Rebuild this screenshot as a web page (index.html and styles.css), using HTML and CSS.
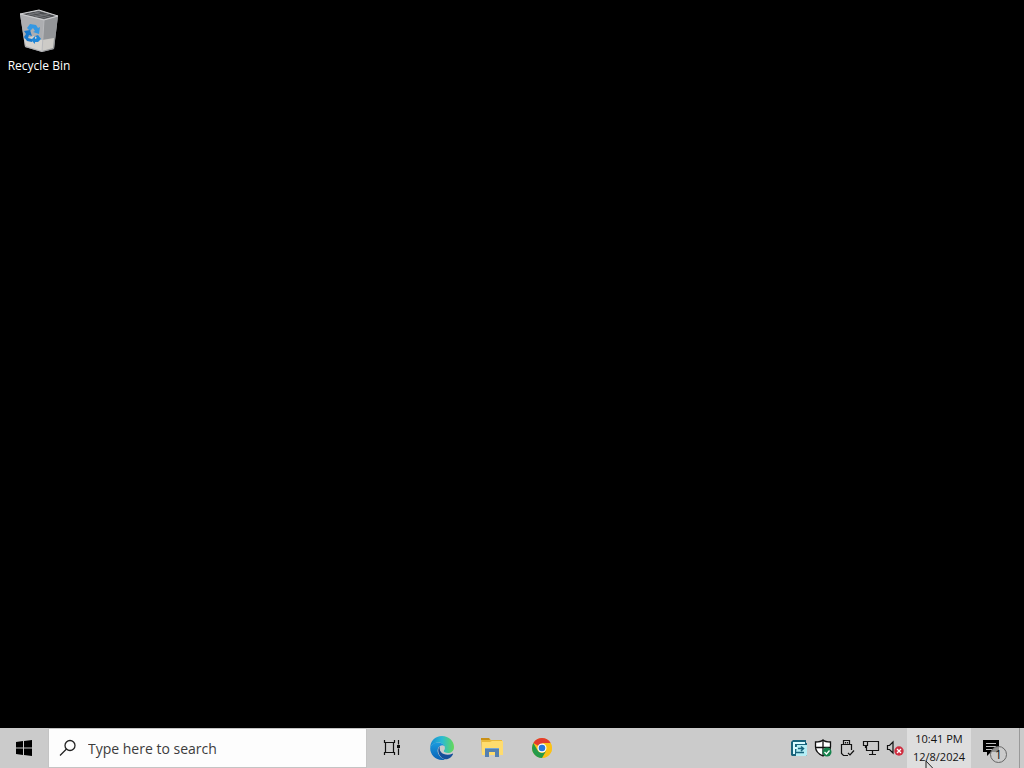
FILE: index.html
```html
<!DOCTYPE html>
<html lang="en">
<head>
  <meta charset="UTF-8">
  <meta name="viewport" content="width=device-width, initial-scale=1.0">
  <title>Desktop</title>
  <link rel="stylesheet" href="styles.css">
</head>
<body>

<main class="desktop">
  <button type="button" class="shortcut">
    <svg width="48" height="48" viewBox="0 0 48 48" aria-hidden="true">
      <path d="M5 6 24 2 43 8 39 41 27 44 10 39z" fill="#a4a5a8"/>
      <path d="M5 6 29 12 27 44 10 39z" fill="#adaeb1"/>
      <path d="M29 12 43 8 39 41 27 44z" fill="#939598"/>
      <path d="M9 31 19 28 27 32 39 30 38 40 27 43 11 38z" fill="#e5e2dc" opacity=".7"/>
      <path d="M7 6 24 3 41 8 29 11z" fill="#4b4d50"/>
      <path d="M14 6 31 10M20 5 35 9M12 7 25 4M20 9 34 6" stroke="#74767a" fill="none"/>
      <path d="M5 6 24 2 43 8 29 12z" fill="none" stroke="#cfd0d2"/>
      <path d="M29 12 27 44" stroke="#b9babd"/>
      <path d="M12 20 15 16 21 17 23 20 25 19 24 26 18 24 20 23 18 20 15 23z" fill="#3498e3"/>
      <path d="M9 23 15 22 17 28 14 27 13 30 17 31 17 34 12 33 9 29 11 26z" fill="#1778cc"/>
      <path d="M23 27 26 31 23 34 20 34 20 36 16 32 20 28 20 31 22 30 20 28z" fill="#1e86d8"/>
    </svg>
    <span>Recycle Bin</span>
  </button>
</main>

<footer class="taskbar">
  <button type="button" class="task" aria-label="Start">
    <svg width="16" height="16" viewBox="0 0 16 16">
      <path d="M0 2 7 1V7.500H0zM8 1 16 0V7.500H8zM0 8.500H7V15L0 14zM8 8.500H16V16L8 15z" fill="#000"/>
    </svg>
  </button>

  <label class="search">
    <svg width="18" height="18" viewBox="0 0 18 18" aria-hidden="true">
      <circle cx="11" cy="6.500" r="5" fill="none" stroke="#222" stroke-width="1.300"/>
      <path d="M7.500 10 1 16.500" stroke="#222" stroke-width="1.300"/>
    </svg>
    <input type="text" placeholder="Type here to search" aria-label="Search">
  </label>

  <nav class="apps">
    <button type="button" class="task" aria-label="Task View">
      <svg width="18" height="18" viewBox="0 0 18 18" fill="none" stroke="#111">
        <path d="M1.500 1V3.500H11.500V1M1.500 16V13.500H11.500V16M2.500 3.500V13.500M10.500 3.500V13.500" stroke-width="1.200"/>
        <path d="M15.500 1V5.500M15.500 9.500V16" stroke-width="1.200"/>
        <path d="M14 6H17V9H14z" fill="#111" stroke="none"/>
      </svg>
    </button>
    <button type="button" class="task" aria-label="Microsoft Edge">
      <svg width="24" height="24" viewBox="0 0 24 24">
        <defs>
          <linearGradient id="edge-top" x1="0" x2="1" y1=".4" y2=".4">
            <stop offset="0" stop-color="#168bd2"/>
            <stop offset=".5" stop-color="#2abbd2"/>
            <stop offset="1" stop-color="#66d957"/>
          </linearGradient>
          <linearGradient id="edge-low" x1="0" x2="0" y1="0" y2="1">
            <stop offset="0" stop-color="#1b9bdf"/>
            <stop offset="1" stop-color="#0961b5"/>
          </linearGradient>
        </defs>
        <path d="M.300 12C0 5 5 0 12 0s12 5 12 11c0 4-3 6-6 6-2.500 0-4.500-.800-4.500-1.900 0-.700 1.200-1.100 1.200-3.100C14.700 9 12 6.500 8.500 6.500 4 6.500 1 9 .300 12z" fill="url(#edge-top)"/>
        <path d="M.200 12C1 8.500 4.500 6.500 8 6.500c3 0 5.500 1.500 6.300 3.500-1-.900-3-1-4.300 0C7 12 7 16 9 19c1.500 2.500 4 4 6 4.500-1 .400-2 .500-3 .500C5.500 24 0 18.500.200 12z" fill="url(#edge-low)"/>
        <path d="M10 10c-3 3-2 9 2 12 3 2.200 6 1.500 8.500-.500 1-.900 2-2.200 2.500-3.300.200-.500-.200-.700-.600-.500C18 20 13 18.500 11 16c-1.500-2-1.600-4-1-6z" fill="#164f9a"/>
        <path d="M14.300 10C15 12 14.700 13.500 13.500 15c0 .800.500 1.300 1.300 1.600-1.500.300-3-.100-3.800-1.100C9.500 13.500 10.500 9.500 14.300 10z" fill="#cbcbcb"/>
      </svg>
    </button>
    <button type="button" class="task" aria-label="File Explorer">
      <svg width="24" height="24" viewBox="0 0 24 24">
        <path d="M1 2H9L11 4H22V19H2z" fill="#e9b93b"/>
        <path d="M1 2H9L10 4H1z" fill="#c98f14"/>
        <path d="M2 6H10L12 5H23V19H2z" fill="#ffdc6e"/>
        <path d="M5 12H19V21H15V16H9V21H5z" fill="#5580b0"/>
        <path d="M5 12H19V13H5z" fill="#77a6d5"/>
      </svg>
    </button>
    <button type="button" class="task" aria-label="Google Chrome">
      <svg width="20" height="20" viewBox="0 0 20 20">
        <circle cx="10" cy="10" r="10" fill="#fbc116"/>
        <path d="M10 10 1.340 5A10 10 0 0 1 18.660 5z" fill="#e33b2e"/>
        <path d="M10 5H18.660A10 10 0 0 1 10 20L14.330 12.500z" fill="#fbc116"/>
        <path d="M1.340 5 5.670 12.500A5 5 0 0 0 14.330 12.500L10 20A10 10 0 0 1 1.340 5z" fill="#249a4a"/>
        <circle cx="10" cy="10" r="4.500" fill="#fff"/>
        <circle cx="10" cy="10" r="3.300" fill="#2878de"/>
      </svg>
    </button>
  </nav>

  <div class="tray">
    <button type="button" class="tray-icon" aria-label="Remote support">
      <svg width="16" height="16" viewBox="0 0 16 16">
        <path d="M2 0H15V3H16V15L15 16H1L0 15V2z" fill="#17647c"/>
        <path d="M6 5H16V15L15 16H5V13z" fill="#b5eef5"/>
        <path d="M3 14V3H14M3 8H6" fill="none" stroke="#d9fbff" stroke-width="2"/>
        <path d="M7 8.500H12M10 6.500 12.500 8.500 10 11M5 12.500H13" fill="none" stroke="#17647c" stroke-width="1.500"/>
      </svg>
    </button>
    <button type="button" class="tray-icon" aria-label="Windows Security">
      <svg width="18" height="18" viewBox="0 0 18 18">
        <path d="M9 1C7 3 4 3 1.500 3V8C1.500 12 4.500 15 9 17 13.500 15 16.500 12 16.500 8V3C14 3 11 3 9 1z" fill="#fff" stroke="#111" stroke-width="1.300"/>
        <path d="M9 1V17M1.500 8.500H16.500" stroke="#111" stroke-width="1.300"/>
        <circle cx="13" cy="13" r="4.500" fill="#16834d"/>
        <path d="M10.500 13 12.500 15 15.500 11.500" fill="none" stroke="#fff" stroke-width="1.300"/>
      </svg>
    </button>
    <button type="button" class="tray-icon" aria-label="Safely remove hardware">
      <svg width="16" height="18" viewBox="0 0 16 18" fill="none" stroke="#111" stroke-width="1.200">
        <path d="M4.500 5.500V1.500H10.500V5.500M9 16.500H4.500L2.500 14.500V5.500H12.500V11M6.500 3V4.500M8.500 3V4.500"/>
        <path d="M9 14 11 16 15 11.500"/>
      </svg>
    </button>
    <button type="button" class="tray-icon" aria-label="Network">
      <svg width="18" height="18" viewBox="0 0 18 18" fill="none" stroke="#111" stroke-width="1.200">
        <path d="M6 2.500H16.500V11.500H4.500V7M10.500 11.500V15.500M7 15.500H14"/>
        <path d="M1.500 2.500H5.500V6.500H1.500zM3.500 6.500V9"/>
      </svg>
    </button>
    <button type="button" class="tray-icon" aria-label="Volume muted">
      <svg width="18" height="18" viewBox="0 0 18 18">
        <path d="M1.500 6.500H3.500L7 3V14L3.500 10.500H1.500z" fill="none" stroke="#111" stroke-width="1.200"/>
        <circle cx="13" cy="12" r="4.700" fill="#cf2e40"/>
        <path d="M11 10 15 14M15 10 11 14" stroke="#fff" stroke-width="1.300"/>
      </svg>
    </button>

    <button type="button" class="clock">
      <span>10:41 PM</span>
      <span>12/8/2024</span>
    </button>

    <button type="button" class="task notifications" aria-label="Notifications">
      <svg width="16" height="16" viewBox="0 0 16 16" aria-hidden="true">
        <path d="M0 0H16V12H8L4 16V12H0z" fill="#000"/>
        <path d="M3 3.500H13M3 6.500H13M3 9.500H10" stroke="#c0c0c0"/>
      </svg>
      <span class="badge">1</span>
    </button>
    <button type="button" class="show-desktop" aria-label="Show desktop"></button>
  </div>
</footer>

<svg class="cursor" width="12" height="18" viewBox="0 0 12 18" aria-hidden="true">
  <path d="M1 1V14L4 11 6.500 16.500 8.500 15.500 6 10.500H10z" fill="#ddd" stroke="#222"/>
</svg>

</body>
</html>
```
FILE: styles.css
```css
* {
  box-sizing: border-box;
}

body {
  margin: 0;
  height: 100vh;
  display: flex;
  flex-direction: column;
  overflow: hidden;
  background-color: #000;
  font-family: "Open Sans", "Noto Sans", sans-serif;
  font-size: 12px;
}

button {
  padding: 0;
  border: none;
  background: none;
  font: inherit;
  color: #111;
}

svg {
  display: block;
  flex: none;
}

.desktop {
  flex: 1;
  padding: 8px 0;
}

.shortcut {
  display: flex;
  flex-direction: column;
  align-items: center;
  gap: 2px;
  width: 78px;
  color: #fff;
  line-height: 16px;
}

.taskbar {
  display: flex;
  height: 40px;
  background-color: #cbcbcb;
}

.task {
  display: flex;
  align-items: center;
  justify-content: center;
  width: 48px;
}

.task:hover,
.tray-icon:hover {
  background-color: #dedede;
}

.search {
  display: flex;
  align-items: center;
  gap: 11px;
  flex: 0 1 319px;
  padding: 0 10px;
  border: 1px solid #c4c4c4;
  background-color: #fdfdfd;
}

.search input {
  flex: 1;
  min-width: 0;
  padding: 0;
  border: none;
  outline: none;
  background: none;
  font: inherit;
  font-size: 14px;
}

.search input::placeholder {
  color: #3c3c3c;
  opacity: 1;
}

.apps {
  display: flex;
  gap: 2px;
  margin-left: 1px;
}

.tray {
  display: flex;
  margin-left: auto;
}

.tray-icon {
  display: flex;
  align-items: center;
  justify-content: center;
  width: 24px;
}

.clock {
  display: flex;
  flex-direction: column;
  justify-content: center;
  align-items: center;
  width: 64px;
  background-color: #dedede;
  font-size: 11px;
  line-height: 18px;
}

.notifications {
  position: relative;
  justify-content: flex-start;
  padding-left: 12px;
}

/* unread count, drawn over the message icon */
.badge {
  position: absolute;
  left: 19px;
  top: 18px;
  width: 17px;
  height: 17px;
  border: 1px solid #666;
  border-radius: 50%;
  background-color: rgba(203, 203, 203, 0.7);
  font-size: 12px;
  line-height: 15px;
  text-align: center;
}

.show-desktop {
  width: 5px;
  border-left: 1px solid #999;
}

.cursor {
  position: absolute;
  left: 925px;
  top: 760px;
  pointer-events: none;
}
```
